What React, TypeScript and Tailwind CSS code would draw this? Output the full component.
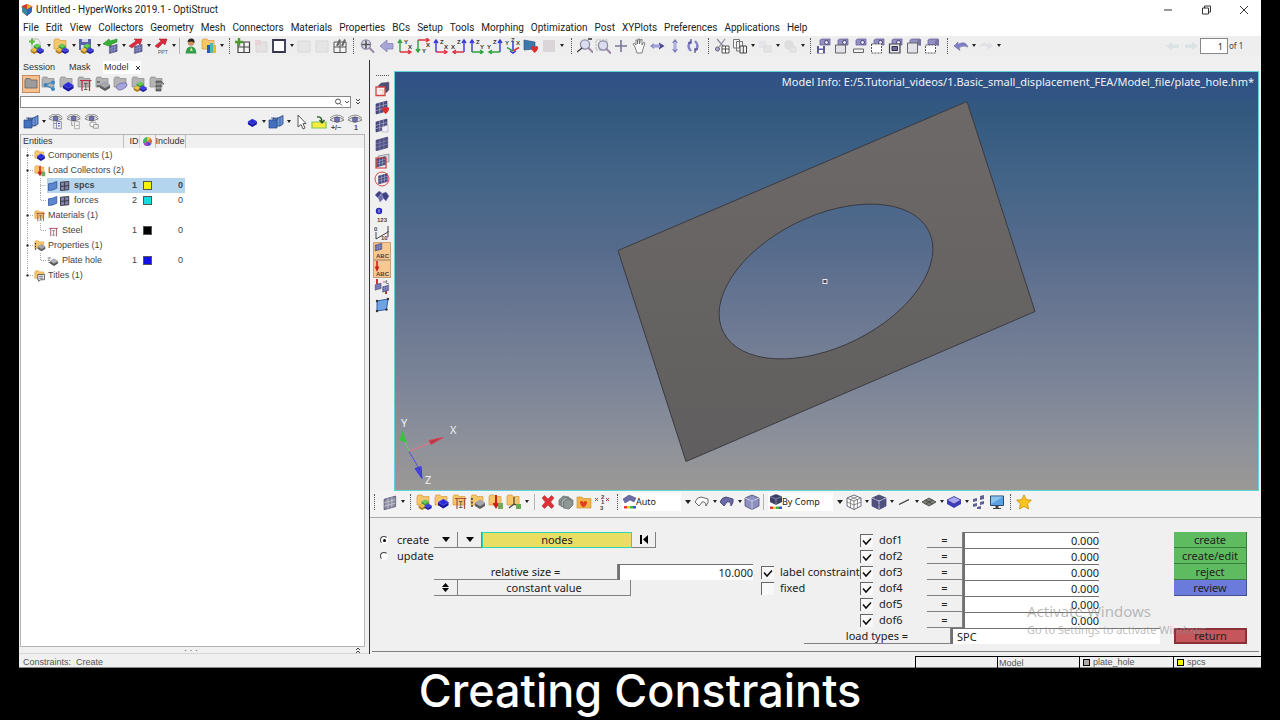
import type { ReactNode } from 'react';

/* ---------- icon parts ---------- */

const Patch = ({ fill = '#5b5f9c', line = '#b9bce0', x = 0, y = 0, s = 1 }: { fill?: string; line?: string; x?: number; y?: number; s?: number }) => (
  <g transform={`translate(${x} ${y}) scale(${s})`}>
    <path d="M2 5 L13 2 V12 L2 15 Z" fill={fill} stroke="#34365f" strokeWidth=".6" />
    <path d="M5.7 4 V14 M9.4 3 V13 M2 8.3 L13 5.3 M2 11.6 L13 8.6" stroke={line} strokeWidth=".6" fill="none" />
  </g>
);

const Sheet = ({ x = 0, y = 0, s = 1 }: { x?: number; y?: number; s?: number }) => (
  <g transform={`translate(${x} ${y}) scale(${s})`}>
    <path d="M5 4 L8 5 L15 1.5 V10 L12 12 L8 12 L5 13 Z" fill="#6f96d8" stroke="#27407c" strokeWidth=".8" />
    <path d="M8 5 V12 M12 3 V12" stroke="#27407c" strokeWidth=".6" />
  </g>
);

const Folder = ({ c = '#f5c66a', e = '#d99a35' }: { c?: string; e?: string }) => (
  <path d="M1 3 L2 1 H6 L7 2.5 H13 V11 H1 Z" fill={c} stroke={e} strokeWidth=".7" />
);

const GreyFolder = () => <Folder c="#b4b4b4" e="#8b8b8b" />;

const Slab = ({ c = '#2a2ad8', d = '#1414a0', x = 0, y = 0, s = 1 }: { c?: string; d?: string; x?: number; y?: number; s?: number }) => (
  <g transform={`translate(${x} ${y}) scale(${s})`}>
    <path d="M1 4 L6 1 L11 4 V7 L6 10 L1 7 Z" fill={d} />
    <path d="M1 4 L6 1 L11 4 L6 7 Z" fill={c} stroke="#9aa0f5" strokeWidth=".4" />
  </g>
);

const Trio = () => (
  <g>
    <Slab c="#5fd53f" d="#2c8d1d" x={5} y={5} s={0.7} />
    <Slab c="#f0c52e" d="#b27a10" x={2} y={9} s={0.7} />
    <Slab c="#3c3ce6" d="#1a1a9c" x={8} y={9} s={0.7} />
  </g>
);

const Eye = ({ y = 0 }: { y?: number }) => (
  <g transform={`translate(0 ${y})`}>
    <path d="M1 5 Q8 -1 15 5 Q8 9 1 5Z" fill="#e8e8f4" stroke="#666" strokeWidth=".8" />
    <circle cx="8" cy="4.6" r="2.6" fill="#6f6fb5" stroke="#444" strokeWidth=".6" />
    <path d="M1 3 Q8 -3 15 3" fill="none" stroke="#777" strokeWidth=".8" />
  </g>
);

const Cam = ({ video = false }: { video?: boolean }) => (
  <g>
    <path d="M4 2 L6 1 H14 V7 H4Z" fill="#9590c4" stroke="#5d5894" strokeWidth=".7" />
    {video ? <path d="M11 3 L15 1 V8 L11 6Z" fill="#77729f" /> : <circle cx="10.5" cy="4.4" r="2" fill="#e6e4f6" stroke="#443f78" />}
  </g>
);

const Cube = ({ c = '#8f90c2', wire = false }: { c?: string; wire?: boolean }) => (
  <g strokeLinejoin="round">
    <path d="M8 1 L15 4 V12 L8 15.5 L1 12 V4Z" fill={wire ? '#fafafa' : c} stroke="#4b4b6c" strokeWidth=".8" />
    <path d="M1 4 L8 7 L15 4 M8 7 V15.5" fill="none" stroke={wire ? '#666' : '#d8d8f2'} strokeWidth=".8" />
  </g>
);

const CubeGrid = () => <path d="M4.5 2.5 L11.5 5.5 V14 M11.5 2.5 L4.5 5.5 V14 M1 8 L8 11 L15 8" fill="none" stroke="#555" strokeWidth=".6" />;

const Lens = () => (
  <g>
    <circle cx="7" cy="6.5" r="4.6" fill="#dcdcf0" stroke="#8c8ca6" strokeWidth="1.3" />
    <path d="M10.5 10 L14.5 14" stroke="#9a86a8" strokeWidth="2" strokeLinecap="round" />
  </g>
);

const IBeam = ({ c = '#a8485a' }: { c?: string }) => (
  <g fill="none" stroke={c}>
    <path d="M3 4.5 H14.5 M5 4.5 V15 M12.5 4.5 V15" strokeWidth="1.2" />
    <path d="M7 7.5 H10.5 M8.8 7.5 V13.5 M7 13.5 H10.5" strokeWidth=".9" stroke="#555" />
  </g>
);

const RED = '#dc3545';
const GREEN = '#2fa33f';
const BLUE = '#3838d8';

/* view corner: two axes meeting, each with its letter */
const Axes = ({ v, h, vc, hc, flip = false, drop = false }: { v: string; h: string; vc: string; hc: string; flip?: boolean; drop?: boolean }) => (
  <g>
    <g transform={`${flip ? 'translate(16 0) scale(-1 1)' : ''} ${drop ? 'translate(0 16) scale(1 -1)' : ''}`} fill="none" strokeWidth="1.4">
      <path d="M3 14 V2 M1 5 L3 2 L5 5" stroke={vc} />
      <path d="M3 14 H14 M11 12 L14 14 L11 16" stroke={hc} />
    </g>
    <g fontSize="6" fontWeight="bold" fill="#333" fontFamily="Liberation Sans, sans-serif">
      <text x={flip ? 6 : 7} y={drop ? 15 : 6}>{v}</text>
      <text x={flip ? 0 : 11} y={drop ? 9 : 11}>{h}</text>
    </g>
  </g>
);

const Caption = ({ t, x = 0, y = 15 }: { t: string; x?: number; y?: number }) => (
  <text x={x} y={y} fontSize="6" fontWeight="bold" fill="#444" fontFamily="Liberation Sans, sans-serif">{t}</text>
);

const Heart = () => <path d="M8 9 Q10 7 11.5 9.5 Q13 7 15 9 Q15.5 12 11.5 15 Q8 12 8 9Z" fill="#e02b2b" />;

const ICONS: Record<string, ReactNode> = {
  app: (
    <g>
      <path d="M8 0 L15 3 L14 11 L8 16 L2 11 L1 3Z" fill="#c8322c" />
      <path d="M8 7 L15 3 L14 11 L8 16Z" fill="#2f67b8" />
      <path d="M8 7 L1 3 L2 11 L8 16Z" fill="#38889c" />
      <path d="M8 0 L15 3 L8 7Z" fill="#e9a52d" />
      <path d="M8 0 L1 3 L8 7Z" fill="#d23a30" />
    </g>
  ),
  newModel: <g><path d="M4 1 H10 L12 4 V12 H4Z" fill="#eee" stroke="#999" strokeWidth=".6" /><path d="M1 3.5 H7 M4 .5 V6.5" stroke="#5cbb3c" strokeWidth="2" /><Trio /></g>,
  openModel: <g><Folder /><Trio /></g>,
  saveModel: <g><path d="M1 1 H13 V12 H1Z" fill="#5a62a8" /><path d="M4 1 H10 V4 H4Z M3 7 H11 V12 H3Z" fill="#d8daf0" /><Trio /></g>,
  importMesh: <g><path d="M0 6 L6 1 L7 3 L14 1 V4 L8 6.5 L9 9Z" fill="#37b034" stroke="#1f7a20" strokeWidth=".5" /><Patch x={5} y={5} s={0.7} /></g>,
  exportMesh: <g><path d="M1 8 L8 3 L6 1 H14 L12 7 L10 5 L4 10Z" fill="#d92b3c" stroke="#9c1a28" strokeWidth=".5" /><Patch x={5} y={5} s={0.7} /></g>,
  exportPpt: <g><path d="M2 8 L8 3 L6 1 H14 L12 7 L10 5 L5 10Z" fill="#d92b3c" stroke="#9c1a28" strokeWidth=".5" /><text x="5" y="15.5" fontSize="5" fill="#555" fontFamily="Liberation Sans, sans-serif">PPT</text></g>,
  user: <g><circle cx="8" cy="4.5" r="3.2" fill="#c98f62" /><path d="M4.5 4 Q5 0 9 .5 Q12 1 11.4 5 Q10 2.5 4.5 4Z" fill="#2a2320" /><path d="M2.5 15.5 Q3 8.5 8 8.5 Q13 8.5 13.5 15.5Z" fill="#2f9e4c" /><path d="M8 9 L10 13 H7Z" fill="#e6e08a" /></g>,
  report: <g><Folder /><path d="M6 7 H9 V15 H6Z" fill="#2f52c4" /><path d="M9 5 H12 V15 H9Z" fill="#4eb8b0" /><path d="M12 7 H15 V15 H12Z" fill="#e8b82c" /></g>,
  addPage: <g><path d="M3 4 H14.5 V14.5 H3Z M3 9 H14.5 M9 4 V14.5" fill="#f4f4f4" stroke="#444" strokeWidth="1.2" /><path d="M0 4 H8 M4 0 V8" stroke="#4f9b2f" strokeWidth="2.4" /></g>,
  delPage: <g opacity=".45"><path d="M3 4 H14 V14 H3Z" fill="#dcd0d4" stroke="#bbb" /><path d="M2 2 H8 V7 H2Z" fill="#e6b3bb" /></g>,
  layout: <path d="M2 2 H14 V14 H2Z" fill="#fff" stroke="#34344a" strokeWidth="1.8" />,
  pageOff: <g opacity=".5"><path d="M2 3 H14 V14 H2Z" fill="#dedede" stroke="#c4c4c4" /></g>,
  pageOpt: <g><path d="M2 4 H14 V14.5 H2Z M2 9 H14 M8 4 V14" fill="#f4f4f4" stroke="#555" /><path d="M5 8 L8 1.5 M10 8 L13 1.5" stroke="#666" strokeWidth="2" /></g>,
  fit: <g><Lens /><path d="M7 2.5 V10.5 M3 6.5 H11" stroke="#555" strokeWidth="1.6" /></g>,
  back: <path d="M1 8 L8 2 V5.5 H14 V11 H8 V14 Z" fill="#a8a6d8" stroke="#7f7cae" strokeWidth=".7" />,
  xy: <Axes v="Y" h="X" vc={GREEN} hc={RED} />,
  xyDown: <Axes v="Y" h="X" vc={GREEN} hc={RED} drop />,
  zx: <Axes v="Z" h="X" vc={BLUE} hc={RED} />,
  zxFlip: <Axes v="Z" h="X" vc={BLUE} hc={RED} flip />,
  zy: <Axes v="Z" h="Y" vc={BLUE} hc={GREEN} />,
  zyFlip: <Axes v="Z" h="Y" vc={BLUE} hc={GREEN} flip />,
  iso: <g fill="none" strokeWidth="1.5"><path d="M8 12 V3" stroke={BLUE} /><path d="M8 13 L2 9.5" stroke={GREEN} /><path d="M8 13 L14 9.5" stroke={RED} /><path d="M5 13 L8 15 L11 13" stroke={BLUE} /><g stroke="none"><Caption t="Y" x={0} y={7} /><Caption t="X" x={11} y={7} /><Caption t="Z" x={6} y={4} /></g></g>,
  favView: <g><path d="M1 2 L12 4 V11 L1 12Z" fill="#3c77ae" stroke="#234d78" strokeWidth=".6" /><Heart /></g>,
  viewOff: <path d="M2 2 H14 V14 H2Z" fill="#d9d5d9" />,
  zoomIn: <g transform="translate(1 0)"><Lens /><path d="M-1 14 L4 10 M10 1 H14" stroke="#333" strokeWidth="1.3" /></g>,
  zoomBox: <g><path d="M1 2 H12 V12 H1Z" fill="none" stroke="#999" strokeDasharray="2 1" strokeWidth=".7" /><g transform="translate(1 1)"><Lens /></g></g>,
  center: <path d="M8 2 V14 M2 8 H14" stroke="#77779a" strokeWidth="1.6" />,
  pan: <path d="M4 9 L2 6 L3.4 5.4 L5 7 V2 H6.5 V6 L7 1 H8.5 V6 L9.5 1.5 H11 V7 L12.5 4.5 L14 5 L12 11 L11 15 H6Z" fill="#f8f8f8" stroke="#666" strokeWidth=".8" />,
  rotH: <g><path d="M1 8 L5 5 V11Z" fill="#8d8cc4" /><path d="M15.5 8 L10 4.5 V11.5Z" fill="#4d4c92" /><path d="M4 6.4 H11 V9.6 H4Z" fill="#a3a2d6" /></g>,
  rotV: <g><path d="M8 1 L5 5 H11Z M8 15 L5 11 H11Z" fill="#7a79b8" /><path d="M6.4 4 H9.6 V12 H6.4Z" fill="#b0afe0" /></g>,
  spin: <g fill="none" stroke="#8583c4" strokeWidth="2.4"><path d="M6 3 Q1 8 6 13 M10 3 Q15 8 10 13" /><path d="M6 1 V5 H3 M10 15 V11 H13" strokeWidth="1.3" stroke="#5a589a" /></g>,
  cut: <g><path d="M3 1 L10 9 M11 1 L5 9" stroke="#8a8aa0" strokeWidth="1.2" /><circle cx="3.5" cy="11" r="2" fill="#aaa8dc" stroke="#666" /><path d="M8 8 H15 V15 H8Z M11.5 8 V15 M8 11 H15" fill="#fff" stroke="#444" strokeWidth=".9" /></g>,
  copy: <g fill="#f4f4f4" stroke="#777"><path d="M1.5 1.5 H7.5 V10 H1.5Z M4.5 3.5 H10.5 V13 H4.5Z" /><path d="M8 8 H14.5 V15 H8Z M11.3 8 V15" stroke="#444" /></g>,
  dimA: <g opacity=".3"><path d="M2 3 H9 V10 H2Z" fill="#cfcfe0" /><path d="M7 8 H14 V14 H7Z" fill="#d0d0d8" stroke="#aaa" /></g>,
  dimB: <g opacity=".3"><circle cx="7" cy="7" r="5" fill="#bbb" /><path d="M8 9 H14 V14 H8Z" fill="#d0d0d8" stroke="#aaa" /></g>,
  camSave: <g><Cam /><path d="M1 8 H9 V15.5 H1Z" fill="#5f5aa0" /><path d="M3 8 H7 V10.5 H3Z M3 12 H7 V15 H3Z" fill="#fff" /></g>,
  camPage: <g><Cam /><path d="M1.5 7 H11.5 V15 H1.5Z" fill="#e2e2e8" stroke="#666" /></g>,
  camLine: <g><Cam /><path d="M1.5 11 H11.5 V14.5 H1.5Z" fill="#f4f4f4" stroke="#666" /></g>,
  camDash: <g><Cam /><path d="M1.5 6 H11.5 V15 H1.5Z" fill="#fff" stroke="#555" strokeDasharray="2 1" /></g>,
  camFrame: <g><Cam /><path d="M1.5 6 H12 V15 H1.5Z" fill="#e8e8f4" stroke="#444" strokeWidth="1.2" /><path d="M4 8.5 H9.5 V12.5 H4Z" fill="#6c68a8" stroke="#333" /></g>,
  vidPage: <g><Cam video /><path d="M1.5 5 H11.5 V15 H1.5Z" fill="#e2e2e8" stroke="#666" /></g>,
  vidDash: <g><Cam video /><path d="M1.5 7 H11.5 V15 H1.5Z" fill="#fff" stroke="#555" strokeDasharray="2 1" /></g>,
  undo: <path d="M1 8 L5 4 V6.5 Q12 2 15 9 Q11 7 6 9.5 L7 12.5Z" fill="#8280c4" stroke="#5f5d9c" strokeWidth=".5" />,
  redo: <path d="M15 8 L11 4 V6.5 Q4 2 1 9 Q5 7 10 9.5 L9 12.5Z" fill="#e0e0e6" />,
  prev: <path d="M1 8 L7 4 V6.5 H14 V10 H7 V12Z" fill="#dbe2e4" />,
  next: <path d="M15 8 L9 4 V6.5 H2 V10 H9 V12Z" fill="#dbe2e4" />,

  bAll: <path d="M2 4 L3 2.5 H7 L8 4 H14 V12 H2Z" fill="#9c9c9c" stroke="#666" strokeWidth=".8" />,
  bTree: <g><GreyFolder /><path d="M4 9 L12 6 M4 9 L12 13" stroke="#3b87c4" strokeWidth="1.2" /><circle cx="4.5" cy="9" r="2" fill="#3b87c4" /><circle cx="12" cy="6.5" r="2" fill="#3b87c4" /><circle cx="12" cy="13" r="2" fill="#3b87c4" /></g>,
  bComp: <g><GreyFolder /><Slab x={3} y={5} s={1.05} /></g>,
  bMat: <g><GreyFolder /><IBeam c="#c02a48" /></g>,
  bProp: <g><GreyFolder /><Slab c="#a9a9a4" d="#5f5f5a" x={4} y={5} /><path d="M2 6 H5 M2 10 H5" stroke="#333" /></g>,
  bSet: <g><GreyFolder /><path d="M3 11 Q6 6 13 7 Q16 10 10 13 Q5 16 3 11Z" fill="#a6a4dc" stroke="#6b69a6" strokeWidth=".8" /></g>,
  bTrio: <g><GreyFolder /><Trio /></g>,
  bUtil: <g><GreyFolder /><path d="M7 5 H12 L15 8 H12 V15 H7Z" fill="#6e6e6e" stroke="#3e3e3e" strokeWidth=".6" /><path d="M5 8 H14 M5 12 H14" stroke="#ccc" strokeWidth=".8" /></g>,
  sheets: <g><Sheet /><path d="M1 6 H9 V14 H1Z" fill="#4470bd" stroke="#27407c" strokeWidth=".7" /><path d="M3 4 L10 4 L9 6" fill="none" stroke="#27407c" strokeWidth=".7" /></g>,
  eyeTree: <g transform="scale(.95)"><Eye /><path d="M6 7 V15 H9 M6 10 H9" stroke="#888" fill="none" strokeWidth=".8" /><path d="M9 8 H14 V15.5 H9Z" fill="#f4f4fa" stroke="#6a6aa0" strokeWidth=".8" /><path d="M10.5 10 H12.5 M10.5 12.5 H12.5" stroke="#3838a0" /></g>,
  eyeDoc: <g transform="scale(.95)"><Eye /><path d="M6 7 V12 H8" stroke="#888" fill="none" strokeWidth=".8" /><path d="M9 8 H14 V15.5 H9Z" fill="#f4f4f4" stroke="#999" strokeWidth=".8" /><path d="M10.5 12 H13" stroke="#999" /></g>,
  eyeShape: <g transform="scale(.95)"><Eye /><ellipse cx="9.5" cy="11" rx="3.5" ry="2.6" fill="#fff" stroke="#777" strokeWidth=".8" /><path d="M10 11 H15 V15 H10Z" fill="#eee" stroke="#888" strokeWidth=".8" /></g>,
  slab: <Slab x={4} y={4} s={0.9} />,
  cursor: <path d="M5 1 V13 L8 10.5 L10 15 L12 14 L10 9.7 L13 9.5Z" fill="#fff" stroke="#444" strokeWidth=".9" />,
  drop: <g><path d="M1 8 H15 V14 H1Z" fill="#f7ee3c" stroke="#7fc45a" strokeWidth="1.2" /><path d="M6 3 Q11 2 11 8 M8.5 6 L11 9 L13.5 6" fill="none" stroke="#2d5b2d" strokeWidth="1.4" /></g>,
  eyePm: <g><Eye y={1} /><text x="2" y="15.5" fontSize="7" fontWeight="bold" fill="#444" fontFamily="Liberation Sans, sans-serif">+/−</text></g>,
  eyeOne: <g><Eye y={1} /><text x="7" y="15.5" fontSize="7" fontWeight="bold" fill="#444" fontFamily="Liberation Sans, sans-serif">1</text></g>,

  tComp: <g><Folder /><Slab x={3} y={4} s={1.05} /></g>,
  tLoad: <g><Folder /><path d="M8 1 V12 M5.5 9 L8 13 L10.5 9" stroke="#cc1f1f" strokeWidth="2" fill="none" /><path d="M10 9 H15 V15 H10Z" fill="#75a85a" /></g>,
  tMat: <g><Folder /><IBeam c="#a85248" /></g>,
  tProp: <g><Folder /><Slab c="#a9a9a4" d="#5f5f5a" x={4} y={5} /><path d="M2 4 V14" stroke="#333" strokeDasharray="2 1.5" strokeWidth="1.4" /></g>,
  tTitle: <g><Folder /><path d="M5 6 H14 V13 H9 L6 15 V13 H5Z" fill="#e8e8f0" stroke="#444" /><path d="M7 8.5 H12 M7 11 H12" stroke="#555" /></g>,
  sheet: <path d="M2 5 Q7 5 13 2 V11 Q8 14 2 14Z" fill="#5b86d0" stroke="#2c4f96" />,
  mesh: <g><path d="M2 3 L13 2 V13 L2 14Z" fill="#8583b4" stroke="#333" strokeWidth="1.2" /><path d="M7.5 3 V13 M2 8.5 L13 7.5" stroke="#333" strokeWidth="1.2" /></g>,
  steel: <IBeam c="#a04458" />,
  prop: <g><Slab c="#b4b4ae" d="#55554f" x={3} y={4} s={1.05} /><path d="M1 4 H5 M1 7 H4 M2 10 H4" stroke="#333" /></g>,

  sRedBox: <g><path d="M4 5 L7 2 L15 1 V9 L12 12" fill="#4d4e78" stroke="#777" strokeWidth=".5" /><path d="M2 6 H11 V14.5 H2Z" fill="#fbeeee" stroke="#cf4545" strokeWidth="1.3" /><path d="M5 9 H9 V14" fill="none" stroke="#d8c0a0" strokeWidth=".8" /></g>,
  sHeart: <g><Patch fill="#4a4c80" /><Heart /></g>,
  sPart: <g><Patch fill="#4a4c80" /><path d="M8 10 L14 8 V15 H8Z" fill="#eef" stroke="#999" strokeWidth=".5" /></g>,
  sMesh: <Patch s={1.05} fill="#505284" line="#8c8fc0" />,
  sMeshRed: <g><path d="M4 3 L15 1 V9 H4Z" fill="#d4d4dc" stroke="#777" strokeWidth=".6" /><Patch x={1} y={2} s={0.8} fill="#4a4c80" /><path d="M2 5 H12 V15 H2Z" fill="none" stroke="#cf3030" strokeWidth="1.2" /></g>,
  sCircle: <g><Patch x={3} y={1} s={0.8} fill="#4a4c80" /><circle cx="8" cy="8" r="7" fill="none" stroke="#d84a4a" strokeWidth="1" /></g>,
  sBino: <g fill="#3f4080" stroke="#8e90c4" strokeWidth=".6"><path d="M1 6 L5 2 L8 4 L4 9Z M7 5 L12 3 L15 7 L12 12 L9 9Z" /><path d="M4 8 L8 6 L9 10 L6 13Z" fill="#6a6ba8" /></g>,
  s123: <g><circle cx="5" cy="4" r="3.2" fill="#2b2bbd" /><path d="M5 2.4 V5.6" stroke="#fff" strokeWidth=".8" /><Caption t="123" x={3} y={15} /></g>,
  sMeasure: <g><path d="M2 14 V7 M2 14 L14 7 V1 M14 6 V12" stroke="#333" strokeWidth=".9" fill="none" /><Caption t="0" x={0} y={6} /><Caption t="10" x={7} y={15} /></g>,
  sAbcMesh: <g><Patch x={0} y={-1} s={0.6} /><Caption t="ABC" x={2} y={15} /></g>,
  sAbcLoad: <g><path d="M3 0 V7 M1.5 5.5 L3 9 L4.5 5.5" stroke="#cc1f1f" strokeWidth="1.6" fill="none" /><Caption t="ABC" x={2} y={15} /></g>,
  sSwap: <g><path d="M3 0 V5 M12 10 V15" stroke="#cc1f1f" strokeWidth="1.8" /><Patch x={0} y={3} s={0.55} /><Patch x={7.5} y={5} s={0.55} /><path d="M9 3 H13 L12 1 M15 5 L12 4" stroke="#555" fill="none" strokeWidth=".8" /></g>,
  sMorph: <g><path d="M3 4 L14 2 L12.5 12.5 L3 14Z" fill="#6ea3e6" stroke="#30609f" /><g fill="#333"><circle cx="3" cy="4" r="1.2" /><circle cx="14" cy="2" r="1.2" /><circle cx="12.5" cy="12.5" r="1.2" /><circle cx="3" cy="14" r="1.2" /></g></g>,

  gMesh: <Patch fill="#8d8da0" line="#d8d8e4" s={1.05} />,
  fTrio: <g><Folder /><Trio /></g>,
  fCoord: <g><Folder /><path d="M8 3 V10 M8 10 L3 14 M8 10 L14 12" stroke="#444" strokeWidth="1.2" fill="none" /><path d="M10 10 H15 V15 H10Z" fill="#67ab4c" /></g>,
  del: <path d="M2 4 L4.5 1.5 L8 5 L11.5 1.5 L14 4 L10.6 8 L14 12 L11.5 14.5 L8 11 L4.5 14.5 L2 12 L5.4 8Z" fill="#dd2f36" stroke="#b01c24" strokeWidth=".5" />,
  spheres: <g stroke="#555d5d" strokeWidth=".6"><path d="M1 6 L5 2 L11 3 V9 L7 12 L1 11Z" fill="#8b9393" /><path d="M3 7 L7 3.5 L13 4.5 V10 L9 13.5 L3 12.5Z" fill="#a3abab" /><path d="M5.5 8 L9 5 L15 6 V11 L11 15 L5.5 14Z" fill="#8e9696" /></g>,
  fHeart: <g><path d="M1 3 H6 L7 4.5 H15 V14 H1Z" fill="#f2b34a" stroke="#c98a2a" strokeWidth=".6" /><path d="M4 8 Q6 6 7.5 8.5 Q9 6 11 8 Q11 11 7.5 13.5 Q4 11 4 8Z" fill="#e23a1d" /></g>,
  renum: <g><Caption t="2" x={7} y={5} /><Caption t="1" x={7} y={10} /><Caption t="3" x={6} y={16} /><path d="M1 4 L4 7 M4 4 L1 7 M12 4 L15 7 M15 4 L12 7" stroke="#c33" /></g>,
  autoCol: <g><path d="M1 5 L7 1 L14 4 L12 8 L8 6 L3 9Z" fill="#6d6ca8" stroke="#45447a" strokeWidth=".5" /><path d="M2 12 H5 V14.5 H2Z" fill="#e23b3b" /><path d="M5 12 H8 V14.5 H5Z" fill="#e8d13c" /><path d="M8 12 H11 V14.5 H8Z" fill="#3cb64a" /><path d="M11 12 H14 V14.5 H11Z" fill="#3c52e0" /></g>,
  compCol: <g><path d="M8 0 L14 2.5 V8 L8 11 L2 8 V2.5Z" fill="#3f4068" /><path d="M2 2.5 L8 5 L14 2.5 M8 5 V11" stroke="#9d9ecb" strokeWidth=".7" fill="none" /><path d="M2 12.5 H5 V15 H2Z" fill="#e23b3b" /><path d="M5 12.5 H8 V15 H5Z" fill="#e8d13c" /><path d="M8 12.5 H11 V15 H8Z" fill="#3cb64a" /><path d="M11 12.5 H14 V15 H11Z" fill="#3c52e0" /></g>,
  surfW: <path d="M1 8 Q3 3 7 3 L14 5 Q15 8 12 12 Q12 7 8 8 L5 12Z" fill="#fff" stroke="#555" strokeWidth=".9" />,
  surfS: <path d="M1 8 Q3 3 7 3 L14 5 Q15 8 12 12 Q12 7 8 8 L5 12Z" fill="#6a69a4" stroke="#45447a" strokeWidth=".9" />,
  cubeS: <Cube />,
  cubeW: <g><Cube wire /><CubeGrid /></g>,
  cubeD: <g><Cube c="#4e4f88" /><CubeGrid /></g>,
  line: <path d="M3 10.5 L13 5.5" stroke="#333" strokeWidth="1.3" />,
  shell: <g><path d="M1 8 L8 4 L15 8 L8 12Z" fill="#7c8078" stroke="#3c3e3a" strokeWidth=".8" /><path d="M4.5 6 L11.5 10 M11.5 6 L4.5 10" stroke="#3c3e3a" strokeWidth=".8" /></g>,
  solid: <g><path d="M1 6 L8 2.5 L15 6 V10 L8 14 L1 10Z" fill="#3e3cb4" /><path d="M1 6 L8 2.5 L15 6 L8 10Z" fill="#a9a8f2" stroke="#33318e" strokeWidth=".7" /></g>,
  shrink: <g fill="#5e5f92"><path d="M2 5 L6 4 V7 L2 8Z M9 2 L13 1 V5 L9 6Z M2 10 L6 9 V12 L2 13Z M9 8 L13 7 V10 L9 11Z M6 13 L10 12 V15 H6Z" /></g>,
  monitor: <g><path d="M1.5 2 H14.5 V11.5 H1.5Z" fill="#5aa3e0" stroke="#2b4a6e" /><path d="M2 2.5 H14 L2 10Z" fill="#8cc4f0" /><path d="M6.5 12 H9.5 V14 H12 V15 H4 V14 H6.5Z" fill="#444" /></g>,
  star: <path d="M8 .8 L10.3 5.6 L15.4 6.2 L11.6 9.8 L12.6 15 L8 12.4 L3.4 15 L4.4 9.8 L.6 6.2 L5.7 5.6Z" fill="#f7c51e" stroke="#c98f10" strokeWidth=".8" />,
};

const Icon = ({ n, small = false }: { n: string; small?: boolean }) => (
  <svg viewBox="0 0 16 16" className={small ? 'h-3 w-3 shrink-0' : 'h-4 w-4 shrink-0'} aria-hidden="true">{ICONS[n]}</svg>
);

const Grip = () => <span className="mx-1 h-4 w-px shrink-0 border-l border-dotted border-[#555]" />;

/* '|' is a grip, '-' a separator, 'v' a drop arrow, '.' a little air */
function Tools({ items }: { items: string[] }) {
  return (
    <>
      {items.map((it, i) => {
        if (it === '|') return <Grip key={i} />;
        if (it === '-') return <span key={i} className="mx-0.5 h-4 w-px shrink-0 bg-[#b5b5b5]" />;
        if (it === '.') return <span key={i} className="w-0.5 shrink-0" />;
        if (it === 'v')
          return (
            <button key={i} aria-label="more" className="flex w-[7px] shrink-0 justify-center">
              <svg viewBox="0 0 6 4" className="h-1 w-1.5"><path d="M1 0 H5 L3 3Z" fill="#222" /></svg>
            </button>
          );
        return (
          <button key={i} aria-label={it} className="flex h-[18px] w-[18px] shrink-0 items-center justify-center">
            <Icon n={it} />
          </button>
        );
      })}
    </>
  );
}

const MENUS = ['File', 'Edit', 'View', 'Collectors', 'Geometry', 'Mesh', 'Connectors', 'Materials', 'Properties', 'BCs', 'Setup', 'Tools', 'Morphing', 'Optimization', 'Post', 'XYPlots', 'Preferences', 'Applications', 'Help'];

const MAIN_TOOLS = [
  'newModel', 'v', 'openModel', 'v', 'saveModel', 'v', 'importMesh', 'v', 'exportMesh', 'v', 'exportPpt', 'v', '-', 'user', 'report', 'v',
  '|', 'addPage', 'delPage', 'layout', 'v', 'pageOff', 'pageOff', 'pageOpt',
  '|', 'fit', '.', 'back', 'xy', 'xyDown', 'zx', 'zxFlip', 'zy', 'zyFlip', 'iso', 'favView', 'viewOff', 'v', '.',
  '|', 'zoomIn', 'zoomBox', 'center', 'pan', 'rotH', 'rotV', 'spin', '.',
  '|', 'cut', 'copy', 'v', 'dimA', 'v', 'dimB', 'v',
  '|', 'camSave', 'camPage', 'camLine', 'camDash', 'camFrame', 'vidPage', 'vidDash', '.',
  '|', 'undo', 'v', 'redo', 'v',
];

const SIDE_TOOLS = ['sRedBox', 'sHeart', 'sPart', 'sMesh', 'sMeshRed', 'sCircle', 'sBino', 's123', 'sMeasure', 'sAbcMesh', 'sAbcLoad', 'sSwap', 'sMorph'];

type Row = { label: string; icons: string[]; child?: boolean; last?: boolean; id?: number; color?: string; selected?: boolean };

const ROWS: Row[] = [
  { label: 'Components (1)', icons: ['tComp'] },
  { label: 'Load Collectors (2)', icons: ['tLoad'] },
  { label: 'spcs', icons: ['sheet', 'mesh'], child: true, id: 1, color: 'bg-[#f4f400]', selected: true },
  { label: 'forces', icons: ['sheet', 'mesh'], child: true, last: true, id: 2, color: 'bg-[#10dede]' },
  { label: 'Materials (1)', icons: ['tMat'] },
  { label: 'Steel', icons: ['steel'], child: true, last: true, id: 1, color: 'bg-black' },
  { label: 'Properties (1)', icons: ['tProp'] },
  { label: 'Plate hole', icons: ['prop'], child: true, last: true, id: 1, color: 'bg-[#1010e0]' },
  { label: 'Titles (1)', icons: ['tTitle'], last: true },
];

function Branch({ row }: { row: Row }) {
  return (
    <svg viewBox={row.child ? '0 0 26 15' : '0 0 13 15'} className={row.child ? 'h-[15px] w-[26px] shrink-0' : 'h-[15px] w-[13px] shrink-0'} fill="none" stroke="#aaa" strokeDasharray="1 1">
      <path d={row.last && !row.child ? 'M6.5 0 V8' : 'M6.5 0 V15'} />
      {row.child ? <path d={row.last ? 'M19.5 0 V7.5 H25' : 'M19.5 0 V15 M19.5 7.5 H25'} /> : <path d="M7 7.5 H12" />}
      {!row.child && <path d="M5.5 7.5 H7.5" stroke="#222" strokeWidth="2" strokeDasharray="none" />}
    </svg>
  );
}

function Browser() {
  return (
    <aside className="flex w-[350px] shrink-0 flex-col pt-[5px] font-['Liberation_Sans',sans-serif] text-[9px] text-[#333]">
      <div className="flex h-[13px] items-center leading-[13px]">
        <button className="w-[46px] pl-1 text-left">Session</button>
        <button className="w-[38px] pl-1 text-left">Mask</button>
        <button className="flex h-[13px] w-[38px] items-center gap-1.5 bg-white pl-px">
          Model
          <svg viewBox="0 0 6 6" className="h-1.5 w-1.5 shrink-0"><path d="M1 1 L5 5 M5 1 L1 5" stroke="#333" strokeWidth="1" /></svg>
        </button>
      </div>
      <div className="flex h-[19px] items-center pl-[3px]">
        <button aria-label="all" className="flex h-[18px] w-[18px] items-center justify-center border border-[#c78a5c] bg-[#f8c08c]"><Icon n="bAll" /></button>
        <Tools items={['bTree', 'bComp', 'bMat', 'bProp', 'bSet', 'bTrio', 'bUtil']} />
      </div>
      <div className="mt-[3px] flex h-3 items-center pl-px">
        <div className="flex h-3 flex-1 items-center border border-[#888] bg-white">
          <input aria-label="Search" className="h-full min-w-0 flex-1 px-1 outline-none" />
          <svg viewBox="0 0 16 8" className="h-2 w-4" fill="none" stroke="#555"><circle cx="4" cy="3.5" r="2.5" /><path d="M6 5.5 L8 7.5 M11 3 L13 5 L15 3" /></svg>
        </div>
        <svg viewBox="0 0 6 6" className="mr-2 ml-1 h-1.5 w-1.5" fill="none" stroke="#444"><path d="M1 0 L3 2 L5 0 M1 3 L3 5 L5 3" /></svg>
      </div>
      <div className="mt-1 mb-[2px] flex h-[20px] items-center pl-[3px]">
        <Tools items={['sheets', 'v', 'eyeTree', 'eyeDoc', 'eyeShape']} />
        <span className="flex-1" />
        <div className="flex items-center pr-[5px]"><Tools items={['slab', 'v', 'sheets', 'v', 'cursor', 'drop', 'eyePm', 'eyeOne']} /></div>
      </div>
      <div className="mr-1 ml-px min-h-0 flex-1 border border-[#b5b5b5] bg-white">
        <table className="w-full table-fixed border-collapse text-left leading-[15px]">
          <thead className="bg-[#f0f0f0]">
            <tr className="h-[13px] leading-[13px]">
              <th className="w-[102px] border-r border-[#c0c0c0] pl-0.5 font-normal">Entities</th>
              <th className="w-4 border-r border-[#d8d8d8] text-right font-normal">ID</th>
              <th className="w-4 border-r border-[#c0c0c0]">
                <svg viewBox="0 0 12 12" className="mx-auto h-[9px] w-[9px]">
                  <path d="M6 6 V0 A6 6 0 0 1 11.2 9Z" fill="#e06a3c" />
                  <path d="M6 6 L11.2 9 A6 6 0 0 1 .8 9Z" fill="#3a46d8" />
                  <path d="M6 6 L.8 9 A6 6 0 0 1 6 0Z" fill="#38b860" />
                  <path d="M6 6 V0 A6 6 0 0 1 10 2Z" fill="#f0d23c" />
                  <path d="M6 6 L6 12 A6 6 0 0 1 1 9Z" fill="#c43cc4" />
                </svg>
              </th>
              <th className="w-[30px] border-r border-[#c0c0c0] font-normal">Include</th>
              <th />
            </tr>
          </thead>
          <tbody>
            {ROWS.map((r) => (
              <tr key={r.label} className="h-[15px] text-[#444]">
                <td>
                  <div className="flex h-[15px] items-center">
                    <Branch row={r} />
                    <div className={r.selected ? 'flex h-[15px] flex-1 items-center bg-[#b4d5ee] font-bold' : 'flex h-[15px] flex-1 items-center'}>
                      {r.icons.map((ic) => <Icon key={ic} n={ic} small />)}
                      <span className={r.child ? 'pl-[3px] whitespace-nowrap' : 'pl-0.5 whitespace-nowrap'}>{r.label}</span>
                    </div>
                  </div>
                </td>
                <td><div className={r.selected ? 'bg-[#b4d5ee] pr-0.5 text-right font-bold' : 'pr-0.5 text-right'}>{r.id}</div></td>
                <td>
                  <div className={r.selected ? 'flex h-[15px] items-center justify-center bg-[#b4d5ee]' : 'flex h-[15px] items-center justify-center'}>
                    {r.color && <span className={`h-[9px] w-[9px] border border-[#555] ${r.color}`} />}
                  </div>
                </td>
                <td><div className={r.selected ? 'bg-[#b4d5ee] pr-0.5 text-right font-bold' : 'pr-0.5 text-right'}>{r.id ? 0 : ''}</div></td>
                <td />
              </tr>
            ))}
          </tbody>
        </table>
      </div>
      <div className="flex h-[7px] items-center border-b border-[#d5d5d5] px-2">
        <span className="flex-1 text-center leading-[4px] text-[#555]">· · ·</span>
        <svg viewBox="0 0 6 6" className="h-1.5 w-1.5" fill="none" stroke="#444"><path d="M1 3 L3 1 L5 3 M1 6 L3 4 L5 6" /></svg>
      </div>
      <div className="h-0.5" />
    </aside>
  );
}

function Viewport() {
  return (
    <div className="relative min-w-0 flex-1 overflow-hidden border border-[#5fd3d8] bg-linear-[180deg,#2f5088_0%,#33597f_10%,#426487_25%,#566b8c_42%,#6a7792_58%,#7c8598_75%,#8f929a_90%,#9b9896_100%]">
      <svg viewBox="0 0 863 417" className="absolute inset-0 h-full w-full">
        <defs>
          <linearGradient id="plate" x1="0" y1="0" x2="0" y2="1">
            <stop offset="0" stopColor="#6d6968" />
            <stop offset="1" stopColor="#605e5e" />
          </linearGradient>
          <mask id="hole">
            <rect width="863" height="417" fill="#fff" />
            <circle r="1" transform="matrix(105 -45 20 63 431 209)" fill="#000" />
          </mask>
        </defs>
        <path d="M572 29 L640 239 L291 389 L223 178Z" fill="url(#plate)" stroke="#3a3a40" mask="url(#hole)" />
        <circle r="1" transform="matrix(105 -45 20 63 431 209)" fill="none" stroke="#3a3a40" vectorEffect="non-scaling-stroke" />
        <rect x="428" y="207" width="4" height="4" fill="#4a4a5c" stroke="#e6e6e6" />

        <g strokeWidth="1">
          <path d="M14 379 L8 362" stroke="#5fd05f" />
          <path d="M7 357 L5 368 L12 370Z" fill="#35c43b" />
          <path d="M14 379 L36 370" stroke="#f07080" />
          <path d="M48 365 L34 368 L36 372Z" fill="#b03a48" stroke="#dd4455" />
          <path d="M14 379 L24 396" stroke="#5050e8" />
          <path d="M27 406 L20 396 L26 394Z" fill="#4444c8" stroke="#3a3ae0" />
        </g>
        <g fill="#f0f0f0" fontSize="11" fontFamily="Noto Sans, sans-serif">
          <text x="6" y="354">Y</text>
          <text x="55" y="361">X</text>
          <text x="30" y="411">Z</text>
        </g>
      </svg>
      <p className="relative pt-0.5 pr-1 text-right text-[11px] leading-4 text-[#eef2f6]">
        Model Info: E:/5.Tutorial_videos/1.Basic_small_displacement_FEA/Model_file/plate_hole.hm*
      </p>
    </div>
  );
}

function ModeSelect({ icon, label, wide = false }: { icon: string; label: string; wide?: boolean }) {
  return (
    <div className={wide ? 'relative flex h-[18px] w-[77px] shrink-0 items-center' : 'relative flex h-[18px] w-[71px] shrink-0 items-center'}>
      <div className="flex h-full flex-1 items-center bg-white"><Icon n={icon} /></div>
      <select aria-label={label} className="absolute inset-0 appearance-none bg-transparent pl-[14px] text-[9px] text-[#222] outline-none">
        <option>{label}</option>
      </select>
      <svg viewBox="0 0 6 4" className="mr-0.5 ml-1 h-1 w-1.5"><path d="M0 0 H6 L3 4Z" fill="#222" /></svg>
    </div>
  );
}

function DisplayBar() {
  return (
    <div className="flex h-[27px] items-center border-b border-[#a8a8a8] bg-[#f3f3f3] pb-1">
      <Tools items={['|', '.', 'gMesh', 'v', '|', 'fTrio', 'tComp', 'tMat', 'tProp', 'tLoad', 'fCoord', 'v', '.', '-', '.', 'del', 'spheres', 'fHeart', 'renum', '.', '|']} />
      <ModeSelect icon="autoCol" label="Auto" />
      <Tools items={['surfW', 'v', 'surfS', 'v', 'cubeS', '-', '.']} />
      <ModeSelect icon="compCol" label="By Comp" wide />
      <Tools items={['cubeW', 'v', 'cubeD', 'v', 'line', 'v', 'shell', 'v', 'solid', 'v', 'shrink', 'monitor', '|', 'star']} />
    </div>
  );
}

const RAISED = 'flex h-4 items-center justify-center border-r border-b border-[#808080]';
const FIELD = 'h-4 min-w-0 rounded-none border-t border-l-2 border-[#707070] bg-white outline-none';

function Check({ id, label, on = true }: { id: string; label: string; on?: boolean }) {
  return (
    <div className="flex h-4 items-center gap-1.5">
      <span className="relative flex h-[13px] w-[13px] shrink-0 items-center justify-center border-t border-l border-[#666] bg-[#f8f8f8]">
        <input id={id} type="checkbox" defaultChecked={on} className="peer absolute inset-0 appearance-none" />
        <svg viewBox="0 0 10 10" className="hidden h-2.5 w-2.5 peer-checked:block"><path d="M1 4.5 L4 8 L9 2.5" fill="none" stroke="#111" strokeWidth="1.6" /></svg>
      </span>
      <label htmlFor={id} className="whitespace-nowrap">{label}</label>
    </div>
  );
}

function Radio({ id, label, on = false }: { id: string; label: string; on?: boolean }) {
  return (
    <div className="flex h-4 items-center gap-[9px]">
      <span className="relative flex h-2 w-2 items-center justify-center rounded-full border border-t-[#444] border-r-transparent border-b-transparent border-l-[#444] bg-white">
        <input id={id} type="radio" name="mode" defaultChecked={on} className="peer absolute inset-0 appearance-none" />
        <span className="hidden h-[3px] w-[3px] rounded-full bg-black peer-checked:block" />
      </span>
      <label htmlFor={id}>{label}</label>
    </div>
  );
}

const ACTIONS = [
  { label: 'create', tone: 'bg-[#5fbb5f] border-[#3c7d3c]' },
  { label: 'create/edit', tone: 'bg-[#5fbb5f] border-[#3c7d3c]' },
  { label: 'reject', tone: 'bg-[#5fbb5f] border-[#3c7d3c]' },
  { label: 'review', tone: 'bg-[#6a7bdc] border-[#424d94]' },
];

function ConstraintPanel() {
  const down = <svg viewBox="0 0 8 5" className="h-[5px] w-2"><path d="M0 0 H8 L4 5Z" /></svg>;
  return (
    <div className="relative mr-[2px] mb-1 ml-[2px] flex h-[134px] border-b border-[#808080] pt-[14px] pl-2 text-[11px] leading-4 text-[#222]">
      <div className="w-[54px] shrink-0">
        <Radio id="create" label="create" on />
        <Radio id="update" label="update" />
      </div>

      <div className="w-[327px] shrink-0">
        <div className="flex h-8">
          <button aria-label="mode" className={`w-6 ${RAISED}`}>{down}</button>
          <button aria-label="entity" className={`w-6 ${RAISED}`}>{down}</button>
          <button className="flex h-4 w-[150px] items-center justify-center border border-[#2fd6b4] bg-[#e9de62]">nodes</button>
          <button aria-label="reset" className={`w-6 ${RAISED}`}>
            <svg viewBox="0 0 10 9" className="h-[9px] w-2.5"><path d="M1 0 H3 V9 H1Z M9 0 V9 L4 4.5Z" /></svg>
          </button>
        </div>
        <div className="flex">
          <label htmlFor="size" className={`w-[184px] ${RAISED}`}>relative size =</label>
          <input id="size" defaultValue="10.000" className={`w-[135px] text-right ${FIELD}`} />
        </div>
        <div className="flex">
          <button aria-label="switch" className={`w-6 ${RAISED}`}><svg viewBox="0 0 7 9" className="h-[9px] w-[7px]"><path d="M0 4 H7 L3.5 0Z M0 5 H7 L3.5 9Z" /></svg></button>
          <button className={`w-[173px] ${RAISED}`}>constant value</button>
        </div>
      </div>

      <div className="w-[400px] shrink-0">
        <div className="flex">
          <div className="w-[99px] shrink-0 pt-8">
            <Check id="label" label="label constraint" />
            <Check id="fixed" label="fixed" on={false} />
          </div>
          <div>
            {[1, 2, 3, 4, 5, 6].map((n) => (
              <div key={n} className="flex">
                <div className="w-[67px]"><Check id={`dof${n}`} label={`dof${n}`} /></div>
                <button className={`w-9 ${RAISED}`}>=</button>
                <input aria-label={`dof${n} value`} defaultValue="0.000" className={`w-[136px] text-right ${FIELD}`} />
              </div>
            ))}
          </div>
        </div>
        <div className="flex pl-[43px]">
          <label htmlFor="types" className={`w-[147px] ${RAISED}`}>load types =</label>
          <select id="types" className={`w-[209px] appearance-none pl-1 ${FIELD}`}><option>SPC</option></select>
        </div>
      </div>

      <div className="flex-1" />
      <div className="mr-3 flex w-[73px] shrink-0 flex-col">
        {ACTIONS.map((a) => (
          <button key={a.label} className={`h-4 border-r border-b leading-[15px] ${a.tone}`}>{a.label}</button>
        ))}
        <button className="mt-8 h-4 border-2 border-[#8c3038] bg-[#c4565c] leading-3">return</button>
      </div>

      <div className="pointer-events-none absolute right-10 bottom-3 w-[192px] whitespace-nowrap text-[#8f8f8f]/60">
        <p className="text-[15px] leading-5">Activate Windows</p>
        <p className="text-[11px] leading-[18px]">Go to Settings to activate Windows.</p>
      </div>
    </div>
  );
}

export default function App() {
  return (
    <div className="flex h-screen flex-col bg-black font-['Noto_Sans',sans-serif]">
      <div className="mr-[19px] ml-[19px] flex min-h-0 flex-1 flex-col bg-[#f0f0f0]">
        <header className="bg-white font-['Roboto',sans-serif] text-[10px] text-[#222]">
          <div className="flex h-[19px] items-center pl-[2px]">
            <Icon n="app" small />
            <h1 className="flex-1 pl-[3px]">Untitled - HyperWorks 2019.1 - OptiStruct</h1>
            <div className="flex gap-[28px] pr-3">
              <button aria-label="Minimize"><svg viewBox="0 0 10 10" className="h-2.5 w-2.5"><path d="M1 5 H9" stroke="#333" /></svg></button>
              <button aria-label="Restore"><svg viewBox="0 0 10 10" className="h-2.5 w-2.5" fill="none" stroke="#333"><path d="M1.5 3 H7.5 V9 H1.5Z M3.5 3 V1 H9.5 V7 H7.5" /></svg></button>
              <button aria-label="Close"><svg viewBox="0 0 10 10" className="h-2.5 w-2.5"><path d="M1 1 L9 9 M9 1 L1 9" stroke="#333" /></svg></button>
            </div>
          </div>
          <nav className="flex h-[17px] items-center gap-[7px] pl-1">
            {MENUS.map((m) => <button key={m}>{m}</button>)}
          </nav>
        </header>

        <div className="flex h-5 items-center bg-[#eeeeee] pl-2">
          <Tools items={MAIN_TOOLS} />
          <span className="flex-1" />
          <Tools items={['prev', 'next']} />
          <input aria-label="Page" defaultValue="1" className="h-4 w-7 border border-[#888] bg-white pr-1 text-right text-[9px] text-[#333]" />
          <span className="w-[33px] pl-px text-[8px] text-[#444]">of 1</span>
        </div>

        <div className="flex min-h-0 flex-1">
          <Browser />
          <div className="mt-1 mb-[2px] w-px bg-[#333]" />
          <main className="flex min-w-0 flex-1 flex-col">
            <div className="flex min-h-0 flex-1 pt-[15px] pr-[2px]">
              <div className="flex w-6 shrink-0 flex-col items-center">
                <span className="mt-1 mb-1 w-[13px] border-t border-dotted border-[#555]" />
                {SIDE_TOOLS.map((t) => (
                  <button
                    key={t}
                    aria-label={t}
                    className={t.startsWith('sAbc') ? 'flex h-[18px] w-[18px] items-center justify-center border border-[#c9a07a] bg-[#f8c890]' : 'flex h-[18px] w-[18px] items-center justify-center'}
                  >
                    <Icon n={t} />
                  </button>
                ))}
              </div>
              <Viewport />
            </div>
            <DisplayBar />
            <ConstraintPanel />
          </main>
        </div>

        <footer className="flex h-3 items-center border-b border-[#888] font-['Liberation_Sans',sans-serif] text-[9px] leading-3 text-[#555]">
          <p className="flex-1 pl-1">Constraints:&nbsp; Create</p>
          <div className="h-3 w-[82px] border-t border-l border-black" />
          <div className="h-3 w-[82px] border-t border-l border-black pl-px">Model</div>
          <div className="flex h-3 w-[94px] items-center gap-[3px] border-t border-l border-black pl-[3px]"><span className="h-[7px] w-[7px] border border-black bg-[#aaa]" />plate_hole</div>
          <div className="flex h-3 w-[88px] items-center gap-[3px] border-t border-l border-black pl-[3px]"><span className="h-[7px] w-[7px] border border-black bg-[#f4f400]" />spcs</div>
        </footer>
      </div>

      <p className="h-[52px] text-center font-['Inter',sans-serif] text-[45px] leading-[46px] font-medium text-white">Creating Constraints</p>
    </div>
  );
}
